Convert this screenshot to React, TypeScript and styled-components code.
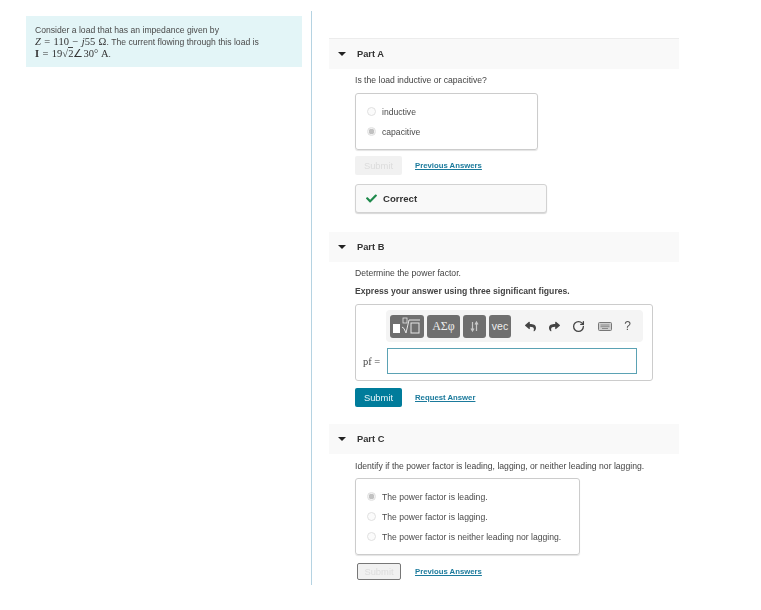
import React from 'react';
import styled, { createGlobalStyle } from 'styled-components';
import { FaReply, FaShare, FaCheck } from 'react-icons/fa';
import { RotateCw } from 'lucide-react';

const GlobalStyle = createGlobalStyle`
  html, body {
    margin: 0;
    padding: 0;
    background: #fff;
    font-family: "Liberation Sans", Arial, sans-serif;
    color: #3d3d3d;
  }
`;

const Page = styled.div`
  display: flex;
  width: 761px;
  height: 610px;
  box-sizing: border-box;
  padding-top: 11px;
  overflow: hidden;
  filter: blur(0.35px);
`;

const LeftColumn = styled.div`
  width: 312px;
  height: 574px;
  box-sizing: border-box;
  padding: 5px 9px 0 26px;
  border-right: 1px solid #b5d3e2;
`;

const Intro = styled.div`
  background: #e3f5f7;
  height: 51px;
  box-sizing: border-box;
  padding: 9px 9px 0;
  font-size: 8.6px;
  line-height: 11px;
  color: #4a4a4a;
`;

const Math = styled.span`
  font-family: "Liberation Serif", serif;
  font-size: 10.5px;
  word-spacing: 0.8px;
  color: #333;
`;

const Var = styled.i`
  font-family: "Liberation Serif", serif;
`;

const Root = styled.span`
  border-top: 1px solid #444;
`;

const RightColumn = styled.div`
  width: 350px;
  margin-left: 17px;
  padding-top: 27px;
`;

const PartHeader = styled.div<{ $first?: boolean; $mt?: number }>`
  display: flex;
  align-items: center;
  height: 30px;
  background: #f9f9f9;
  border-top: ${(p) => (p.$first ? '1px solid #ececec' : 'none')};
  margin-top: ${(p) => p.$mt ?? 0}px;
  font-size: 9.3px;
  font-weight: bold;
  color: #333;
`;

const Caret = styled.span`
  width: 0;
  height: 0;
  margin: 0 11px 0 9px;
  border-left: 4px solid transparent;
  border-right: 4px solid transparent;
  border-top: 4px solid #222;
`;

const PartBody = styled.div`
  padding-left: 26px;
`;

const Prompt = styled.div<{ $top: number; $bold?: boolean }>`
  margin-top: ${(p) => p.$top}px;
  font-size: 8.65px;
  line-height: 11px;
  font-weight: ${(p) => (p.$bold ? 'bold' : 'normal')};
  color: #444;
  white-space: nowrap;
`;

const OptionBox = styled.div<{ $width: number; $height: number; $pad: number; $top: number }>`
  display: flex;
  flex-direction: column;
  gap: 9px;
  width: ${(p) => p.$width}px;
  height: ${(p) => p.$height}px;
  box-sizing: border-box;
  margin-top: ${(p) => p.$top}px;
  padding: ${(p) => p.$pad}px 0 0 11px;
  border: 1px solid #ccc;
  border-radius: 3px;
  box-shadow: 0 1px 1px #e4e4e4;
`;

const Option = styled.div`
  display: flex;
  align-items: center;
  gap: 6px;
  height: 11px;
  font-size: 8.6px;
  color: #4a4a4a;
  white-space: nowrap;
`;

const Radio = styled.span<{ $on?: boolean }>`
  width: 9px;
  height: 9px;
  box-sizing: border-box;
  border: 1px solid #e0e0e0;
  border-radius: 50%;
  background: ${(p) => (p.$on ? 'radial-gradient(circle, #c2c2c2 0 2.6px, #f2f2f2 3px)' : '#fbfbfb')};
`;

const ActionRow = styled.div<{ $top: number }>`
  display: flex;
  align-items: center;
  gap: 13px;
  margin-top: ${(p) => p.$top}px;
`;

const SubmitButton = styled.div<{ $state: 'off' | 'on' | 'focus' }>`
  display: flex;
  align-items: center;
  justify-content: center;
  box-sizing: border-box;
  width: ${(p) => (p.$state === 'focus' ? '44px' : '47px')};
  height: ${(p) => (p.$state === 'focus' ? '17px' : '19px')};
  margin-left: ${(p) => (p.$state === 'focus' ? '2px' : '0')};
  margin-right: ${(p) => (p.$state === 'focus' ? '1px' : '0')};
  border-radius: 2px;
  border: ${(p) => (p.$state === 'focus' ? '1px solid #777' : 'none')};
  background: ${(p) => (p.$state === 'on' ? '#007c9b' : '#f1f1f1')};
  color: ${(p) => (p.$state === 'on' ? '#e8f6fa' : '#dcdcdc')};
  font-size: 9.4px;
`;

const AnswerLink = styled.a`
  font-size: 7.75px;
  font-weight: bold;
  color: #1b7a9c;
  text-decoration: underline;
  white-space: nowrap;
`;

const Feedback = styled.div`
  display: flex;
  align-items: center;
  gap: 6px;
  width: 192px;
  height: 29px;
  box-sizing: border-box;
  margin-top: 9px;
  padding-left: 10px;
  background: #f9f9f9;
  border: 1px solid #d2d2d2;
  border-radius: 3px;
  box-shadow: 0 1px 1px #d8d8d8;
  font-size: 9.6px;
  font-weight: bold;
  color: #333;
`;

const AnswerBox = styled.div`
  width: 298px;
  height: 77px;
  box-sizing: border-box;
  margin-top: 7px;
  padding: 5px 0 0 7px;
  border: 1px solid #ccc;
  border-radius: 3px;
`;

const Toolbar = styled.div`
  display: flex;
  align-items: center;
  width: 257px;
  height: 32px;
  box-sizing: border-box;
  margin-left: 23px;
  padding: 0 4px;
  gap: 3px;
  background: #f4f4f4;
  border-radius: 4px;
`;

const ToolButton = styled.div<{ $width: number; $serif?: boolean }>`
  display: flex;
  align-items: center;
  justify-content: center;
  width: ${(p) => p.$width}px;
  height: 23px;
  flex: none;
  border-radius: 3px;
  background: #6f6f6f;
  color: #eee;
  font-family: ${(p) => (p.$serif ? '"Liberation Serif", serif' : '"Liberation Sans", sans-serif')};
  font-size: ${(p) => (p.$serif ? '12px' : '10.5px')};
`;

const ToolActions = styled.div`
  display: flex;
  align-items: center;
  justify-content: space-between;
  flex: 1;
  padding: 0 8px 0 11px;
  color: #444;
`;

const HelpMark = styled.span`
  font-size: 12px;
  color: #555;
`;

const AnswerRow = styled.div`
  display: flex;
  align-items: center;
  gap: 7px;
  margin-top: 6px;
`;

const AnswerLabel = styled.span`
  font-family: "Liberation Serif", serif;
  font-size: 10.5px;
  color: #444;
`;

const AnswerInput = styled.div`
  width: 250px;
  height: 26px;
  box-sizing: border-box;
  border: 1px solid #5ba2b4;
`;

const parts = {
  a: ['inductive', 'capacitive'],
  c: [
    'The power factor is leading.',
    'The power factor is lagging.',
    'The power factor is neither leading nor lagging.',
  ],
};

const TemplateIcon = () => (
  <svg width="30" height="18" viewBox="0 0 30 18" fill="none">
    <rect x="1" y="7" width="7" height="9" fill="#fff" />
    <path d="M10 10l2 1.5 2 4.5 3-13h11" stroke="#e6e6e6" strokeWidth="1" />
    <rect x="11" y="1" width="4" height="5" stroke="#e6e6e6" strokeWidth="0.8" />
    <rect x="19" y="6" width="8" height="10" stroke="#e6e6e6" strokeWidth="1" />
  </svg>
);

const ArrowsIcon = () => (
  <svg width="9" height="11" viewBox="0 0 9 11" fill="none" stroke="#c9c9c9" strokeWidth="1.2">
    <path d="M2.5 1v8M1 7.5l1.5 2.5 1.5-2.5" />
    <path d="M6.5 10V2M5 3.5L6.5 1 8 3.5" />
  </svg>
);

// the reference keyboard is a pale outlined box, not a solid glyph
const KeyboardIcon = () => (
  <svg width="14" height="9" viewBox="0 0 14 9" fill="#cfcfcf" stroke="#777">
    <rect x="0.5" y="0.5" width="13" height="8" rx="1" />
    <path d="M2.5 3h9M2.5 4.7h9M4 6.5h6" fill="none" strokeWidth="0.8" />
  </svg>
);

const App: React.FC = () => (
  <>
    <GlobalStyle />
    <Page>
      <LeftColumn>
        <Intro>
          Consider a load that has an impedance given by
          <br />
          <Math>
            <Var>Z</Var> = 110 − <Var>j</Var>55 Ω
          </Math>
          . The current flowing through this load is
          <br />
          <Math>
            <b>I</b> = 19√<Root>2</Root>∠30° A
          </Math>
          .
        </Intro>
      </LeftColumn>
      <RightColumn>
        <PartHeader $first>
          <Caret />
          Part A
        </PartHeader>
        <PartBody>
          <Prompt $top={6}>Is the load inductive or capacitive?</Prompt>
          <OptionBox $width={183} $height={57} $pad={12} $top={7}>
            <Option>
              <Radio />
              {parts.a[0]}
            </Option>
            <Option>
              <Radio $on />
              {parts.a[1]}
            </Option>
          </OptionBox>
          <ActionRow $top={6}>
            <SubmitButton $state="off">Submit</SubmitButton>
            <AnswerLink>Previous Answers</AnswerLink>
          </ActionRow>
          <Feedback>
            <FaCheck size={11} color="#1f8a4c" />
            Correct
          </Feedback>
        </PartBody>

        <PartHeader $mt={19}>
          <Caret />
          Part B
        </PartHeader>
        <PartBody>
          <Prompt $top={6}>Determine the power factor.</Prompt>
          <Prompt $top={7} $bold>Express your answer using three significant figures.</Prompt>
          <AnswerBox>
            <Toolbar>
              <ToolButton $width={34}><TemplateIcon /></ToolButton>
              <ToolButton $width={33} $serif>ΑΣφ</ToolButton>
              <ToolButton $width={23}><ArrowsIcon /></ToolButton>
              <ToolButton $width={22}>vec</ToolButton>
              <ToolActions>
                <FaReply size={11} />
                <FaShare size={11} />
                <RotateCw size={13} strokeWidth={2.4} />
                <KeyboardIcon />
                <HelpMark>?</HelpMark>
              </ToolActions>
            </Toolbar>
            <AnswerRow>
              <AnswerLabel>pf =</AnswerLabel>
              <AnswerInput />
            </AnswerRow>
          </AnswerBox>
          <ActionRow $top={7}>
            <SubmitButton $state="on">Submit</SubmitButton>
            <AnswerLink>Request Answer</AnswerLink>
          </ActionRow>
        </PartBody>

        <PartHeader $mt={17}>
          <Caret />
          Part C
        </PartHeader>
        <PartBody>
          <Prompt $top={7}>Identify if the power factor is leading, lagging, or neither leading nor lagging.</Prompt>
          <OptionBox $width={225} $height={77} $pad={12} $top={6}>
            <Option>
              <Radio $on />
              {parts.c[0]}
            </Option>
            <Option>
              <Radio />
              {parts.c[1]}
            </Option>
            <Option>
              <Radio />
              {parts.c[2]}
            </Option>
          </OptionBox>
          <ActionRow $top={8}>
            <SubmitButton $state="focus">Submit</SubmitButton>
            <AnswerLink>Previous Answers</AnswerLink>
          </ActionRow>
        </PartBody>
      </RightColumn>
    </Page>
  </>
);

export default App;
